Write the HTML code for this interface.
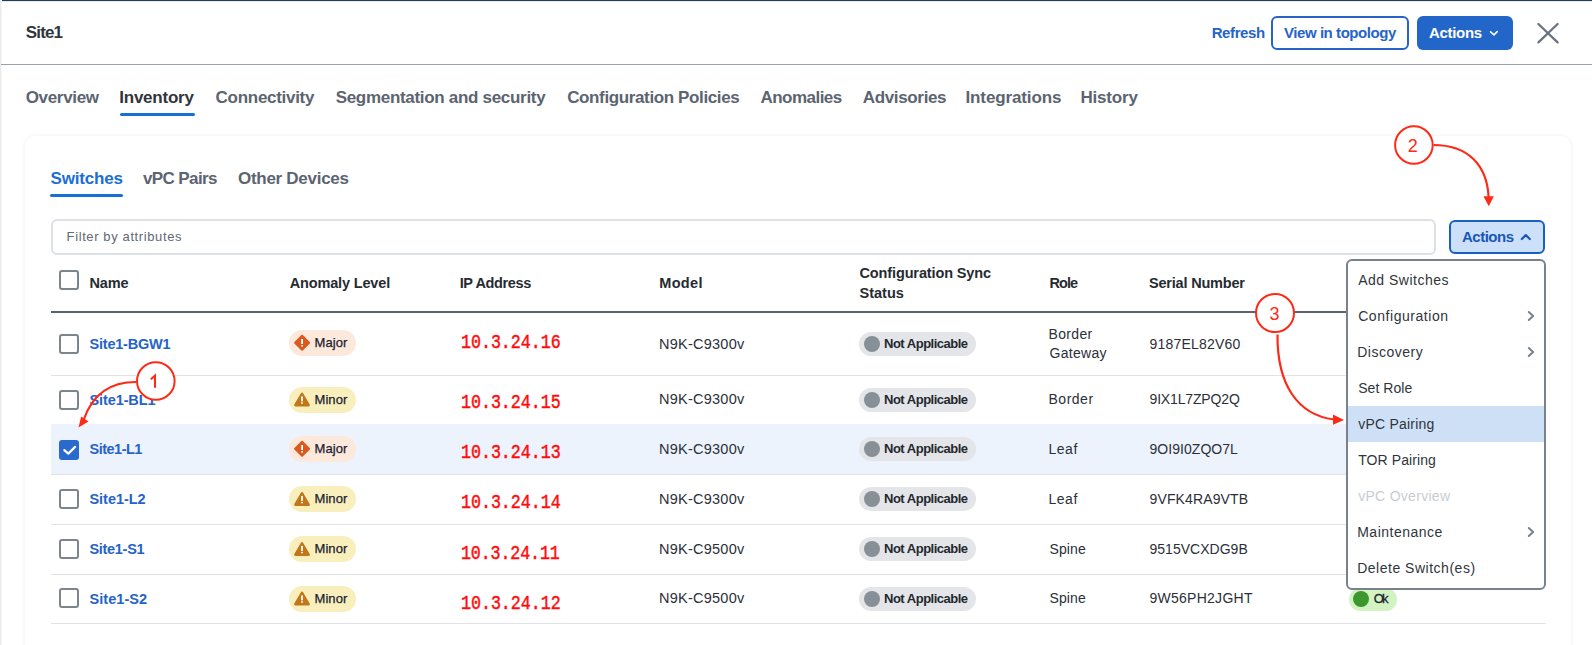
<!DOCTYPE html>
<html><head><meta charset="utf-8"><title>Site1 Inventory</title>
<style>
html,body{margin:0;padding:0;background:#fff;width:1592px;height:645px;overflow:hidden;position:relative;font-family:'Liberation Sans', sans-serif}
</style></head><body>
<div style="position:absolute;left:0px;top:0px;width:1592px;height:1px;background:#243d5a"></div>
<div style="position:absolute;left:0px;top:1px;width:1592px;height:1px;background:#e6e9ec"></div>
<div style="position:absolute;left:0px;top:0px;width:1px;height:645px;background:#ebebeb"></div>
<div style="position:absolute;left:1px;top:0px;width:1px;height:645px;background:#f5f5f5"></div>
<div style="position:absolute;left:1px;top:64px;width:1591px;height:1px;background:#9aa1a9"></div>
<div style="position:absolute;left:1271px;top:16px;width:138px;height:34px;box-sizing:border-box;border:2px solid #2563c8;border-radius:6px;background:#fff"></div>
<div style="position:absolute;left:1417px;top:16px;width:96px;height:34px;border-radius:6px;background:#2366c9"></div>
<div style="position:absolute;left:120px;top:113px;width:75px;height:3px;background:#1670d6;border-radius:2px"></div>
<div style="position:absolute;left:25px;top:136px;width:1546px;height:560px;background:#fff;border-radius:10px;box-shadow:0 0 4px rgba(0,0,0,0.07)"></div>
<div style="position:absolute;left:50px;top:194px;width:73px;height:3px;background:#1670d6;border-radius:2px"></div>
<div style="position:absolute;left:51px;top:219px;width:1385px;height:36px;box-sizing:border-box;border:2px solid #dde1e6;border-radius:6px;background:#fff"></div>
<div style="position:absolute;left:59px;top:270px;width:20px;height:20px;box-sizing:border-box;border:2px solid #7c858e;border-radius:3px;background:#fff"></div>
<div style="position:absolute;left:51px;top:311px;width:1495px;height:2px;background:#5d646c"></div>
<div style="position:absolute;left:51px;top:375px;width:1495px;height:1px;background:#dfe2e6"></div>
<div style="position:absolute;left:59px;top:334px;width:20px;height:20px;box-sizing:border-box;border:2px solid #7c858e;border-radius:3px;background:#fff"></div>
<div style="position:absolute;left:289px;top:330.0px;width:67px;height:26px;border-radius:13px;background:#fde8dc"></div>
<div style="position:absolute;left:859px;top:332.0px;width:117px;height:24px;border-radius:12px;background:#e3e5e8"></div>
<div style="position:absolute;left:864px;top:336.0px;width:16px;height:16px;border-radius:8px;background:#878f97"></div>
<div style="position:absolute;left:51px;top:424px;width:1495px;height:1px;background:#dfe2e6"></div>
<div style="position:absolute;left:59px;top:390px;width:20px;height:20px;box-sizing:border-box;border:2px solid #7c858e;border-radius:3px;background:#fff"></div>
<div style="position:absolute;left:289px;top:386.5px;width:67px;height:26px;border-radius:13px;background:#f9efbd"></div>
<div style="position:absolute;left:859px;top:387.5px;width:117px;height:24px;border-radius:12px;background:#e3e5e8"></div>
<div style="position:absolute;left:864px;top:391.5px;width:16px;height:16px;border-radius:8px;background:#878f97"></div>
<div style="position:absolute;left:51px;top:424px;width:1495px;height:50px;background:#edf3fc"></div>
<div style="position:absolute;left:51px;top:474px;width:1495px;height:1px;background:#dfe2e6"></div>
<div style="position:absolute;left:59px;top:440px;width:20px;height:20px;border-radius:3px;background:#2a6acf"></div>
<div style="position:absolute;left:289px;top:436.0px;width:67px;height:26px;border-radius:13px;background:#fde8dc"></div>
<div style="position:absolute;left:859px;top:437.0px;width:117px;height:24px;border-radius:12px;background:#e3e5e8"></div>
<div style="position:absolute;left:864px;top:441.0px;width:16px;height:16px;border-radius:8px;background:#878f97"></div>
<div style="position:absolute;left:51px;top:524px;width:1495px;height:1px;background:#dfe2e6"></div>
<div style="position:absolute;left:59px;top:489px;width:20px;height:20px;box-sizing:border-box;border:2px solid #7c858e;border-radius:3px;background:#fff"></div>
<div style="position:absolute;left:289px;top:486.0px;width:67px;height:26px;border-radius:13px;background:#f9efbd"></div>
<div style="position:absolute;left:859px;top:487.0px;width:117px;height:24px;border-radius:12px;background:#e3e5e8"></div>
<div style="position:absolute;left:864px;top:491.0px;width:16px;height:16px;border-radius:8px;background:#878f97"></div>
<div style="position:absolute;left:51px;top:574px;width:1495px;height:1px;background:#dfe2e6"></div>
<div style="position:absolute;left:59px;top:539px;width:20px;height:20px;box-sizing:border-box;border:2px solid #7c858e;border-radius:3px;background:#fff"></div>
<div style="position:absolute;left:289px;top:536.0px;width:67px;height:26px;border-radius:13px;background:#f9efbd"></div>
<div style="position:absolute;left:859px;top:537.0px;width:117px;height:24px;border-radius:12px;background:#e3e5e8"></div>
<div style="position:absolute;left:864px;top:541.0px;width:16px;height:16px;border-radius:8px;background:#878f97"></div>
<div style="position:absolute;left:51px;top:623px;width:1495px;height:1px;background:#dfe2e6"></div>
<div style="position:absolute;left:59px;top:588px;width:20px;height:20px;box-sizing:border-box;border:2px solid #7c858e;border-radius:3px;background:#fff"></div>
<div style="position:absolute;left:289px;top:585.5px;width:67px;height:26px;border-radius:13px;background:#f9efbd"></div>
<div style="position:absolute;left:859px;top:586.5px;width:117px;height:24px;border-radius:12px;background:#e3e5e8"></div>
<div style="position:absolute;left:864px;top:590.5px;width:16px;height:16px;border-radius:8px;background:#878f97"></div>
<div style="position:absolute;left:1349px;top:587.5px;width:48px;height:23px;border-radius:12px;background:#d3f3c2"></div>
<div style="position:absolute;left:1353px;top:591px;width:16px;height:16px;border-radius:8px;background:#3c982e"></div>
<div style="position:absolute;left:1449px;top:220px;width:96px;height:34px;box-sizing:border-box;border:2px solid #1a5fc4;border-radius:6px;background:#cce0f9"></div>
<div style="position:absolute;left:1346px;top:259px;width:199.5px;height:331px;box-sizing:border-box;border:2px solid #79828c;border-radius:6px;background:#fff"></div>
<div style="position:absolute;left:1348px;top:406px;width:195.5px;height:36px;background:#cde0f6"></div>
<div style="position:absolute;left:25.80px;top:20.80px;font-family:'Liberation Sans', sans-serif;font-weight:700;font-size:17px;line-height:24px;letter-spacing:-0.844px;color:#30353b;white-space:pre;">Site1</div>
<div style="position:absolute;left:1211.70px;top:21.30px;font-family:'Liberation Sans', sans-serif;font-weight:700;font-size:15px;line-height:24px;letter-spacing:-0.399px;color:#2563c8;white-space:pre;">Refresh</div>
<div style="position:absolute;left:1284.00px;top:21.30px;font-family:'Liberation Sans', sans-serif;font-weight:700;font-size:15px;line-height:24px;letter-spacing:-0.437px;color:#2563c8;white-space:pre;">View in topology</div>
<div style="position:absolute;left:1429.00px;top:21.30px;font-family:'Liberation Sans', sans-serif;font-weight:700;font-size:15px;line-height:24px;letter-spacing:-0.310px;color:#ffffff;white-space:pre;">Actions</div>
<div style="position:absolute;left:25.70px;top:86.20px;font-family:'Liberation Sans', sans-serif;font-weight:700;font-size:17px;line-height:24px;letter-spacing:-0.326px;color:#5b6470;white-space:pre;">Overview</div>
<div style="position:absolute;left:119.30px;top:86.20px;font-family:'Liberation Sans', sans-serif;font-weight:700;font-size:17px;line-height:24px;letter-spacing:-0.245px;color:#30353b;white-space:pre;">Inventory</div>
<div style="position:absolute;left:215.60px;top:86.20px;font-family:'Liberation Sans', sans-serif;font-weight:700;font-size:17px;line-height:24px;letter-spacing:-0.287px;color:#5b6470;white-space:pre;">Connectivity</div>
<div style="position:absolute;left:335.70px;top:86.20px;font-family:'Liberation Sans', sans-serif;font-weight:700;font-size:17px;line-height:24px;letter-spacing:-0.305px;color:#5b6470;white-space:pre;">Segmentation and security</div>
<div style="position:absolute;left:567.20px;top:86.20px;font-family:'Liberation Sans', sans-serif;font-weight:700;font-size:17px;line-height:24px;letter-spacing:-0.374px;color:#5b6470;white-space:pre;">Configuration Policies</div>
<div style="position:absolute;left:760.40px;top:86.20px;font-family:'Liberation Sans', sans-serif;font-weight:700;font-size:17px;line-height:24px;letter-spacing:-0.515px;color:#5b6470;white-space:pre;">Anomalies</div>
<div style="position:absolute;left:862.80px;top:86.20px;font-family:'Liberation Sans', sans-serif;font-weight:700;font-size:17px;line-height:24px;letter-spacing:-0.352px;color:#5b6470;white-space:pre;">Advisories</div>
<div style="position:absolute;left:965.50px;top:86.20px;font-family:'Liberation Sans', sans-serif;font-weight:700;font-size:17px;line-height:24px;letter-spacing:-0.121px;color:#5b6470;white-space:pre;">Integrations</div>
<div style="position:absolute;left:1080.40px;top:86.20px;font-family:'Liberation Sans', sans-serif;font-weight:700;font-size:17px;line-height:24px;letter-spacing:-0.186px;color:#5b6470;white-space:pre;">History</div>
<div style="position:absolute;left:50.50px;top:167.00px;font-family:'Liberation Sans', sans-serif;font-weight:700;font-size:17px;line-height:24px;letter-spacing:-0.191px;color:#1a6fd6;white-space:pre;">Switches</div>
<div style="position:absolute;left:143.00px;top:167.00px;font-family:'Liberation Sans', sans-serif;font-weight:700;font-size:17px;line-height:24px;letter-spacing:-0.616px;color:#5b6470;white-space:pre;">vPC Pairs</div>
<div style="position:absolute;left:238.00px;top:167.00px;font-family:'Liberation Sans', sans-serif;font-weight:700;font-size:17px;line-height:24px;letter-spacing:-0.282px;color:#5b6470;white-space:pre;">Other Devices</div>
<div style="position:absolute;left:66.60px;top:224.80px;font-family:'Liberation Sans', sans-serif;font-weight:400;font-size:13px;line-height:24px;letter-spacing:0.610px;color:#5f6873;white-space:pre;">Filter by attributes</div>
<div style="position:absolute;left:89.40px;top:271.00px;font-family:'Liberation Sans', sans-serif;font-weight:700;font-size:14.5px;line-height:24px;letter-spacing:-0.143px;color:#262b31;white-space:pre;">Name</div>
<div style="position:absolute;left:289.70px;top:271.00px;font-family:'Liberation Sans', sans-serif;font-weight:700;font-size:14.5px;line-height:24px;letter-spacing:-0.151px;color:#262b31;white-space:pre;">Anomaly Level</div>
<div style="position:absolute;left:459.70px;top:271.00px;font-family:'Liberation Sans', sans-serif;font-weight:700;font-size:14.5px;line-height:24px;letter-spacing:-0.376px;color:#262b31;white-space:pre;">IP Address</div>
<div style="position:absolute;left:659.20px;top:271.00px;font-family:'Liberation Sans', sans-serif;font-weight:700;font-size:14.5px;line-height:24px;letter-spacing:0.361px;color:#262b31;white-space:pre;">Model</div>
<div style="position:absolute;left:859.50px;top:261.00px;font-family:'Liberation Sans', sans-serif;font-weight:700;font-size:14.5px;line-height:24px;letter-spacing:-0.127px;color:#262b31;white-space:pre;">Configuration Sync</div>
<div style="position:absolute;left:859.50px;top:281.00px;font-family:'Liberation Sans', sans-serif;font-weight:700;font-size:14.5px;line-height:24px;letter-spacing:0.000px;color:#262b31;white-space:pre;">Status</div>
<div style="position:absolute;left:1049.60px;top:271.00px;font-family:'Liberation Sans', sans-serif;font-weight:700;font-size:14.5px;line-height:24px;letter-spacing:-0.986px;color:#262b31;white-space:pre;">Role</div>
<div style="position:absolute;left:1149.00px;top:271.00px;font-family:'Liberation Sans', sans-serif;font-weight:700;font-size:14.5px;line-height:24px;letter-spacing:-0.198px;color:#262b31;white-space:pre;">Serial Number</div>
<div style="position:absolute;left:89.50px;top:332.00px;font-family:'Liberation Sans', sans-serif;font-weight:700;font-size:14.5px;line-height:24px;letter-spacing:-0.213px;color:#2563c8;white-space:pre;">Site1-BGW1</div>
<div style="position:absolute;left:314.60px;top:331.00px;font-family:'Liberation Sans', sans-serif;font-weight:400;font-size:13px;line-height:24px;letter-spacing:0.031px;color:#1b2230;white-space:pre;-webkit-text-stroke:0.25px #1b2230;">Major</div>
<div style="position:absolute;left:460.57px;top:331.00px;font-family:'Liberation Mono', monospace;font-weight:400;font-size:20px;line-height:24px;letter-spacing:-0.046px;color:#ff0d0d;white-space:pre;-webkit-text-stroke:0.5px #ff0d0d;transform:scaleX(0.8333);transform-origin:0 0;">10.3.24.16</div>
<div style="position:absolute;left:659.00px;top:331.50px;font-family:'Liberation Sans', sans-serif;font-weight:400;font-size:14.5px;line-height:24px;letter-spacing:0.248px;color:#2b3038;white-space:pre;">N9K-C9300v</div>
<div style="position:absolute;left:884.00px;top:332.00px;font-family:'Liberation Sans', sans-serif;font-weight:700;font-size:13px;line-height:24px;letter-spacing:-0.498px;color:#23282e;white-space:pre;">Not Applicable</div>
<div style="position:absolute;left:1048.50px;top:321.70px;font-family:'Liberation Sans', sans-serif;font-weight:400;font-size:14px;line-height:24px;letter-spacing:0.348px;color:#2b3038;white-space:pre;">Border</div>
<div style="position:absolute;left:1049.50px;top:341.40px;font-family:'Liberation Sans', sans-serif;font-weight:400;font-size:14px;line-height:24px;letter-spacing:0.309px;color:#2b3038;white-space:pre;">Gateway</div>
<div style="position:absolute;left:1149.50px;top:331.50px;font-family:'Liberation Sans', sans-serif;font-weight:400;font-size:14px;line-height:24px;letter-spacing:0.194px;color:#2b3038;white-space:pre;">9187EL82V60</div>
<div style="position:absolute;left:89.50px;top:387.50px;font-family:'Liberation Sans', sans-serif;font-weight:700;font-size:14.5px;line-height:24px;letter-spacing:-0.102px;color:#2563c8;white-space:pre;">Site1-BL1</div>
<div style="position:absolute;left:314.60px;top:387.50px;font-family:'Liberation Sans', sans-serif;font-weight:400;font-size:13px;line-height:24px;letter-spacing:0.031px;color:#1b2230;white-space:pre;-webkit-text-stroke:0.25px #1b2230;">Minor</div>
<div style="position:absolute;left:460.57px;top:391.00px;font-family:'Liberation Mono', monospace;font-weight:400;font-size:20px;line-height:24px;letter-spacing:-0.046px;color:#ff0d0d;white-space:pre;-webkit-text-stroke:0.5px #ff0d0d;transform:scaleX(0.8333);transform-origin:0 0;">10.3.24.15</div>
<div style="position:absolute;left:659.00px;top:387.00px;font-family:'Liberation Sans', sans-serif;font-weight:400;font-size:14.5px;line-height:24px;letter-spacing:0.248px;color:#2b3038;white-space:pre;">N9K-C9300v</div>
<div style="position:absolute;left:884.00px;top:387.50px;font-family:'Liberation Sans', sans-serif;font-weight:700;font-size:13px;line-height:24px;letter-spacing:-0.498px;color:#23282e;white-space:pre;">Not Applicable</div>
<div style="position:absolute;left:1048.50px;top:387.00px;font-family:'Liberation Sans', sans-serif;font-weight:400;font-size:14px;line-height:24px;letter-spacing:0.508px;color:#2b3038;white-space:pre;">Border</div>
<div style="position:absolute;left:1149.50px;top:387.00px;font-family:'Liberation Sans', sans-serif;font-weight:400;font-size:14px;line-height:24px;letter-spacing:-0.154px;color:#2b3038;white-space:pre;">9IX1L7ZPQ2Q</div>
<div style="position:absolute;left:89.50px;top:437.00px;font-family:'Liberation Sans', sans-serif;font-weight:700;font-size:14.5px;line-height:24px;letter-spacing:-0.506px;color:#2563c8;white-space:pre;">Site1-L1</div>
<div style="position:absolute;left:314.60px;top:437.00px;font-family:'Liberation Sans', sans-serif;font-weight:400;font-size:13px;line-height:24px;letter-spacing:0.031px;color:#1b2230;white-space:pre;-webkit-text-stroke:0.25px #1b2230;">Major</div>
<div style="position:absolute;left:460.57px;top:441.00px;font-family:'Liberation Mono', monospace;font-weight:400;font-size:20px;line-height:24px;letter-spacing:-0.046px;color:#ff0d0d;white-space:pre;-webkit-text-stroke:0.5px #ff0d0d;transform:scaleX(0.8333);transform-origin:0 0;">10.3.24.13</div>
<div style="position:absolute;left:659.00px;top:436.50px;font-family:'Liberation Sans', sans-serif;font-weight:400;font-size:14.5px;line-height:24px;letter-spacing:0.248px;color:#2b3038;white-space:pre;">N9K-C9300v</div>
<div style="position:absolute;left:884.00px;top:437.00px;font-family:'Liberation Sans', sans-serif;font-weight:700;font-size:13px;line-height:24px;letter-spacing:-0.498px;color:#23282e;white-space:pre;">Not Applicable</div>
<div style="position:absolute;left:1048.50px;top:436.50px;font-family:'Liberation Sans', sans-serif;font-weight:400;font-size:14px;line-height:24px;letter-spacing:0.514px;color:#2b3038;white-space:pre;">Leaf</div>
<div style="position:absolute;left:1149.50px;top:436.50px;font-family:'Liberation Sans', sans-serif;font-weight:400;font-size:14px;line-height:24px;letter-spacing:0.046px;color:#2b3038;white-space:pre;">9OI9I0ZQO7L</div>
<div style="position:absolute;left:89.50px;top:487.00px;font-family:'Liberation Sans', sans-serif;font-weight:700;font-size:14.5px;line-height:24px;letter-spacing:-0.049px;color:#2563c8;white-space:pre;">Site1-L2</div>
<div style="position:absolute;left:314.60px;top:487.00px;font-family:'Liberation Sans', sans-serif;font-weight:400;font-size:13px;line-height:24px;letter-spacing:0.031px;color:#1b2230;white-space:pre;-webkit-text-stroke:0.25px #1b2230;">Minor</div>
<div style="position:absolute;left:460.57px;top:491.40px;font-family:'Liberation Mono', monospace;font-weight:400;font-size:20px;line-height:24px;letter-spacing:-0.046px;color:#ff0d0d;white-space:pre;-webkit-text-stroke:0.5px #ff0d0d;transform:scaleX(0.8333);transform-origin:0 0;">10.3.24.14</div>
<div style="position:absolute;left:659.00px;top:486.50px;font-family:'Liberation Sans', sans-serif;font-weight:400;font-size:14.5px;line-height:24px;letter-spacing:0.248px;color:#2b3038;white-space:pre;">N9K-C9300v</div>
<div style="position:absolute;left:884.00px;top:487.00px;font-family:'Liberation Sans', sans-serif;font-weight:700;font-size:13px;line-height:24px;letter-spacing:-0.498px;color:#23282e;white-space:pre;">Not Applicable</div>
<div style="position:absolute;left:1048.50px;top:486.50px;font-family:'Liberation Sans', sans-serif;font-weight:400;font-size:14px;line-height:24px;letter-spacing:0.514px;color:#2b3038;white-space:pre;">Leaf</div>
<div style="position:absolute;left:1149.50px;top:486.50px;font-family:'Liberation Sans', sans-serif;font-weight:400;font-size:14px;line-height:24px;letter-spacing:0.128px;color:#2b3038;white-space:pre;">9VFK4RA9VTB</div>
<div style="position:absolute;left:89.50px;top:537.00px;font-family:'Liberation Sans', sans-serif;font-weight:700;font-size:14.5px;line-height:24px;letter-spacing:-0.308px;color:#2563c8;white-space:pre;">Site1-S1</div>
<div style="position:absolute;left:314.60px;top:537.00px;font-family:'Liberation Sans', sans-serif;font-weight:400;font-size:13px;line-height:24px;letter-spacing:0.031px;color:#1b2230;white-space:pre;-webkit-text-stroke:0.25px #1b2230;">Minor</div>
<div style="position:absolute;left:460.57px;top:541.60px;font-family:'Liberation Mono', monospace;font-weight:400;font-size:20px;line-height:24px;letter-spacing:-0.157px;color:#ff0d0d;white-space:pre;-webkit-text-stroke:0.5px #ff0d0d;transform:scaleX(0.8333);transform-origin:0 0;">10.3.24.11</div>
<div style="position:absolute;left:659.00px;top:536.50px;font-family:'Liberation Sans', sans-serif;font-weight:400;font-size:14.5px;line-height:24px;letter-spacing:0.248px;color:#2b3038;white-space:pre;">N9K-C9500v</div>
<div style="position:absolute;left:884.00px;top:537.00px;font-family:'Liberation Sans', sans-serif;font-weight:700;font-size:13px;line-height:24px;letter-spacing:-0.498px;color:#23282e;white-space:pre;">Not Applicable</div>
<div style="position:absolute;left:1049.50px;top:536.50px;font-family:'Liberation Sans', sans-serif;font-weight:400;font-size:14px;line-height:24px;letter-spacing:0.120px;color:#2b3038;white-space:pre;">Spine</div>
<div style="position:absolute;left:1149.50px;top:536.50px;font-family:'Liberation Sans', sans-serif;font-weight:400;font-size:14px;line-height:24px;letter-spacing:0.018px;color:#2b3038;white-space:pre;">9515VCXDG9B</div>
<div style="position:absolute;left:89.50px;top:586.50px;font-family:'Liberation Sans', sans-serif;font-weight:700;font-size:14.5px;line-height:24px;letter-spacing:0.049px;color:#2563c8;white-space:pre;">Site1-S2</div>
<div style="position:absolute;left:314.60px;top:586.50px;font-family:'Liberation Sans', sans-serif;font-weight:400;font-size:13px;line-height:24px;letter-spacing:0.031px;color:#1b2230;white-space:pre;-webkit-text-stroke:0.25px #1b2230;">Minor</div>
<div style="position:absolute;left:460.57px;top:591.80px;font-family:'Liberation Mono', monospace;font-weight:400;font-size:20px;line-height:24px;letter-spacing:-0.046px;color:#ff0d0d;white-space:pre;-webkit-text-stroke:0.5px #ff0d0d;transform:scaleX(0.8333);transform-origin:0 0;">10.3.24.12</div>
<div style="position:absolute;left:659.00px;top:586.00px;font-family:'Liberation Sans', sans-serif;font-weight:400;font-size:14.5px;line-height:24px;letter-spacing:0.248px;color:#2b3038;white-space:pre;">N9K-C9500v</div>
<div style="position:absolute;left:884.00px;top:586.50px;font-family:'Liberation Sans', sans-serif;font-weight:700;font-size:13px;line-height:24px;letter-spacing:-0.498px;color:#23282e;white-space:pre;">Not Applicable</div>
<div style="position:absolute;left:1049.50px;top:586.00px;font-family:'Liberation Sans', sans-serif;font-weight:400;font-size:14px;line-height:24px;letter-spacing:0.120px;color:#2b3038;white-space:pre;">Spine</div>
<div style="position:absolute;left:1149.50px;top:586.00px;font-family:'Liberation Sans', sans-serif;font-weight:400;font-size:14px;line-height:24px;letter-spacing:0.259px;color:#2b3038;white-space:pre;">9W56PH2JGHT</div>
<div style="position:absolute;left:1373.80px;top:587.00px;font-family:'Liberation Sans', sans-serif;font-weight:400;font-size:13px;line-height:24px;letter-spacing:-1.912px;color:#1d2630;white-space:pre;-webkit-text-stroke:0.3px #1d2630;">Ok</div>
<div style="position:absolute;left:1462.00px;top:224.70px;font-family:'Liberation Sans', sans-serif;font-weight:700;font-size:15px;line-height:24px;letter-spacing:-0.494px;color:#1a56b8;white-space:pre;">Actions</div>
<div style="position:absolute;left:1358.20px;top:268.00px;font-family:'Liberation Sans', sans-serif;font-weight:400;font-size:14px;line-height:24px;letter-spacing:0.498px;color:#30353b;white-space:pre;">Add Switches</div>
<div style="position:absolute;left:1358.20px;top:304.00px;font-family:'Liberation Sans', sans-serif;font-weight:400;font-size:14px;line-height:24px;letter-spacing:0.551px;color:#30353b;white-space:pre;">Configuration</div>
<div style="position:absolute;left:1357.20px;top:340.00px;font-family:'Liberation Sans', sans-serif;font-weight:400;font-size:14px;line-height:24px;letter-spacing:0.506px;color:#30353b;white-space:pre;">Discovery</div>
<div style="position:absolute;left:1358.20px;top:376.00px;font-family:'Liberation Sans', sans-serif;font-weight:400;font-size:14px;line-height:24px;letter-spacing:0.056px;color:#30353b;white-space:pre;">Set Role</div>
<div style="position:absolute;left:1358.20px;top:412.00px;font-family:'Liberation Sans', sans-serif;font-weight:400;font-size:14px;line-height:24px;letter-spacing:0.227px;color:#30353b;white-space:pre;">vPC Pairing</div>
<div style="position:absolute;left:1358.20px;top:448.00px;font-family:'Liberation Sans', sans-serif;font-weight:400;font-size:14px;line-height:24px;letter-spacing:0.092px;color:#30353b;white-space:pre;">TOR Pairing</div>
<div style="position:absolute;left:1358.20px;top:484.00px;font-family:'Liberation Sans', sans-serif;font-weight:400;font-size:14px;line-height:24px;letter-spacing:0.284px;color:#c8cdd2;white-space:pre;">vPC Overview</div>
<div style="position:absolute;left:1357.20px;top:520.00px;font-family:'Liberation Sans', sans-serif;font-weight:400;font-size:14px;line-height:24px;letter-spacing:0.502px;color:#30353b;white-space:pre;">Maintenance</div>
<div style="position:absolute;left:1357.20px;top:556.00px;font-family:'Liberation Sans', sans-serif;font-weight:400;font-size:14px;line-height:24px;letter-spacing:0.510px;color:#30353b;white-space:pre;">Delete Switch(es)</div>
<svg style="position:absolute;left:0;top:0" width="1592" height="645"><path d="M1490.6 31.8 L1494 34.9 L1497.2 31.6" fill="none" stroke="#fff" stroke-width="1.6" stroke-linecap="round" stroke-linejoin="round"/><path d="M1538.4 24 L1557.6 42.4 M1557.6 24 L1538.4 42.4" fill="none" stroke="#6b7480" stroke-width="2.3" stroke-linecap="round"/></svg>
<svg style="position:absolute;left:0;top:0" width="1592" height="645"><g transform="translate(302.1 342.8)"><path d="M0 -7 L7 0 L0 7 L-7 0 Z" fill="#d9591f" stroke="#d9591f" stroke-width="2" stroke-linejoin="round"/><rect x="-0.9" y="-3.8" width="1.8" height="5" fill="#fff"/><rect x="-0.9" y="2.3" width="1.8" height="1.5" fill="#fff"/></g><g transform="translate(302 399.5)"><path d="M0 -5.6 L6.6 5.6 L-6.6 5.6 Z" fill="#c2761a" stroke="#c2761a" stroke-width="2.6" stroke-linejoin="round"/><rect x="-0.9" y="-3.1" width="1.8" height="5" fill="#fff"/><rect x="-0.9" y="2.8" width="1.8" height="1.5" fill="#fff"/></g><path d="M64.3 450.2 L68.3 453.6 L75.1 446.9" transform="translate(0 0)" fill="none" stroke="#fff" stroke-width="2.2" stroke-linecap="round" stroke-linejoin="round"/><g transform="translate(302.1 448.8)"><path d="M0 -7 L7 0 L0 7 L-7 0 Z" fill="#d9591f" stroke="#d9591f" stroke-width="2" stroke-linejoin="round"/><rect x="-0.9" y="-3.8" width="1.8" height="5" fill="#fff"/><rect x="-0.9" y="2.3" width="1.8" height="1.5" fill="#fff"/></g><g transform="translate(302 499.0)"><path d="M0 -5.6 L6.6 5.6 L-6.6 5.6 Z" fill="#c2761a" stroke="#c2761a" stroke-width="2.6" stroke-linejoin="round"/><rect x="-0.9" y="-3.1" width="1.8" height="5" fill="#fff"/><rect x="-0.9" y="2.8" width="1.8" height="1.5" fill="#fff"/></g><g transform="translate(302 549.0)"><path d="M0 -5.6 L6.6 5.6 L-6.6 5.6 Z" fill="#c2761a" stroke="#c2761a" stroke-width="2.6" stroke-linejoin="round"/><rect x="-0.9" y="-3.1" width="1.8" height="5" fill="#fff"/><rect x="-0.9" y="2.8" width="1.8" height="1.5" fill="#fff"/></g><g transform="translate(302 598.5)"><path d="M0 -5.6 L6.6 5.6 L-6.6 5.6 Z" fill="#c2761a" stroke="#c2761a" stroke-width="2.6" stroke-linejoin="round"/><rect x="-0.9" y="-3.1" width="1.8" height="5" fill="#fff"/><rect x="-0.9" y="2.8" width="1.8" height="1.5" fill="#fff"/></g><path d="M1521.8 239 L1525.8 235.1 L1529.8 239" fill="none" stroke="#1a56b8" stroke-width="2.2" stroke-linecap="round" stroke-linejoin="round"/><path d="M1528.8 312 L1533.1 316 L1528.8 320" fill="none" stroke="#79818b" stroke-width="2" stroke-linecap="round" stroke-linejoin="round"/><path d="M1528.8 348 L1533.1 352 L1528.8 356" fill="none" stroke="#79818b" stroke-width="2" stroke-linecap="round" stroke-linejoin="round"/><path d="M1528.8 528 L1533.1 532 L1528.8 536" fill="none" stroke="#79818b" stroke-width="2" stroke-linecap="round" stroke-linejoin="round"/></svg>
<svg style="position:absolute;left:0;top:0;z-index:4" width="1592" height="645"><circle cx="155.8" cy="381" r="18.8" fill="#fff" stroke="#fd2a17" stroke-width="2"/><path d="M136 382 C 108 382, 92 396, 84 419" fill="none" stroke="#fd2a17" stroke-width="2.2"/><path d="M78.5 427.5 L81.2 416.5 L88.5 421.5 Z" fill="#fd2a17"/><circle cx="1413.9" cy="145" r="18.8" fill="#fff" stroke="#fd2a17" stroke-width="2"/><path d="M1433.5 145 C 1468 145, 1487 165, 1488.6 197" fill="none" stroke="#fd2a17" stroke-width="2.2"/><path d="M1483.4 196.3 L1493.8 196.3 L1488.8 206.3 Z" fill="#fd2a17"/><circle cx="1275" cy="313" r="19" fill="#fff" stroke="#fd2a17" stroke-width="2"/><path d="M1277.5 334.5 C 1277 385, 1298 415, 1334 419.5" fill="none" stroke="#fd2a17" stroke-width="2.2"/><path d="M1333 414.5 L1344 420 L1333 424.8 Z" fill="#fd2a17"/><path d="M150.9 379.2 L155 375.6 L155 387.8" fill="none" stroke="#fd2a17" stroke-width="2.1" stroke-linejoin="miter"/></svg>
<div style="position:absolute;left:1407.80px;top:133.70px;font-family:'Liberation Sans', sans-serif;font-weight:400;font-size:18px;line-height:24px;letter-spacing:0.000px;color:#fd2a17;white-space:pre;z-index:5;">2</div>
<div style="position:absolute;left:1269.40px;top:302.00px;font-family:'Liberation Sans', sans-serif;font-weight:400;font-size:18px;line-height:24px;letter-spacing:0.000px;color:#fd2a17;white-space:pre;z-index:5;">3</div>
</body></html>
